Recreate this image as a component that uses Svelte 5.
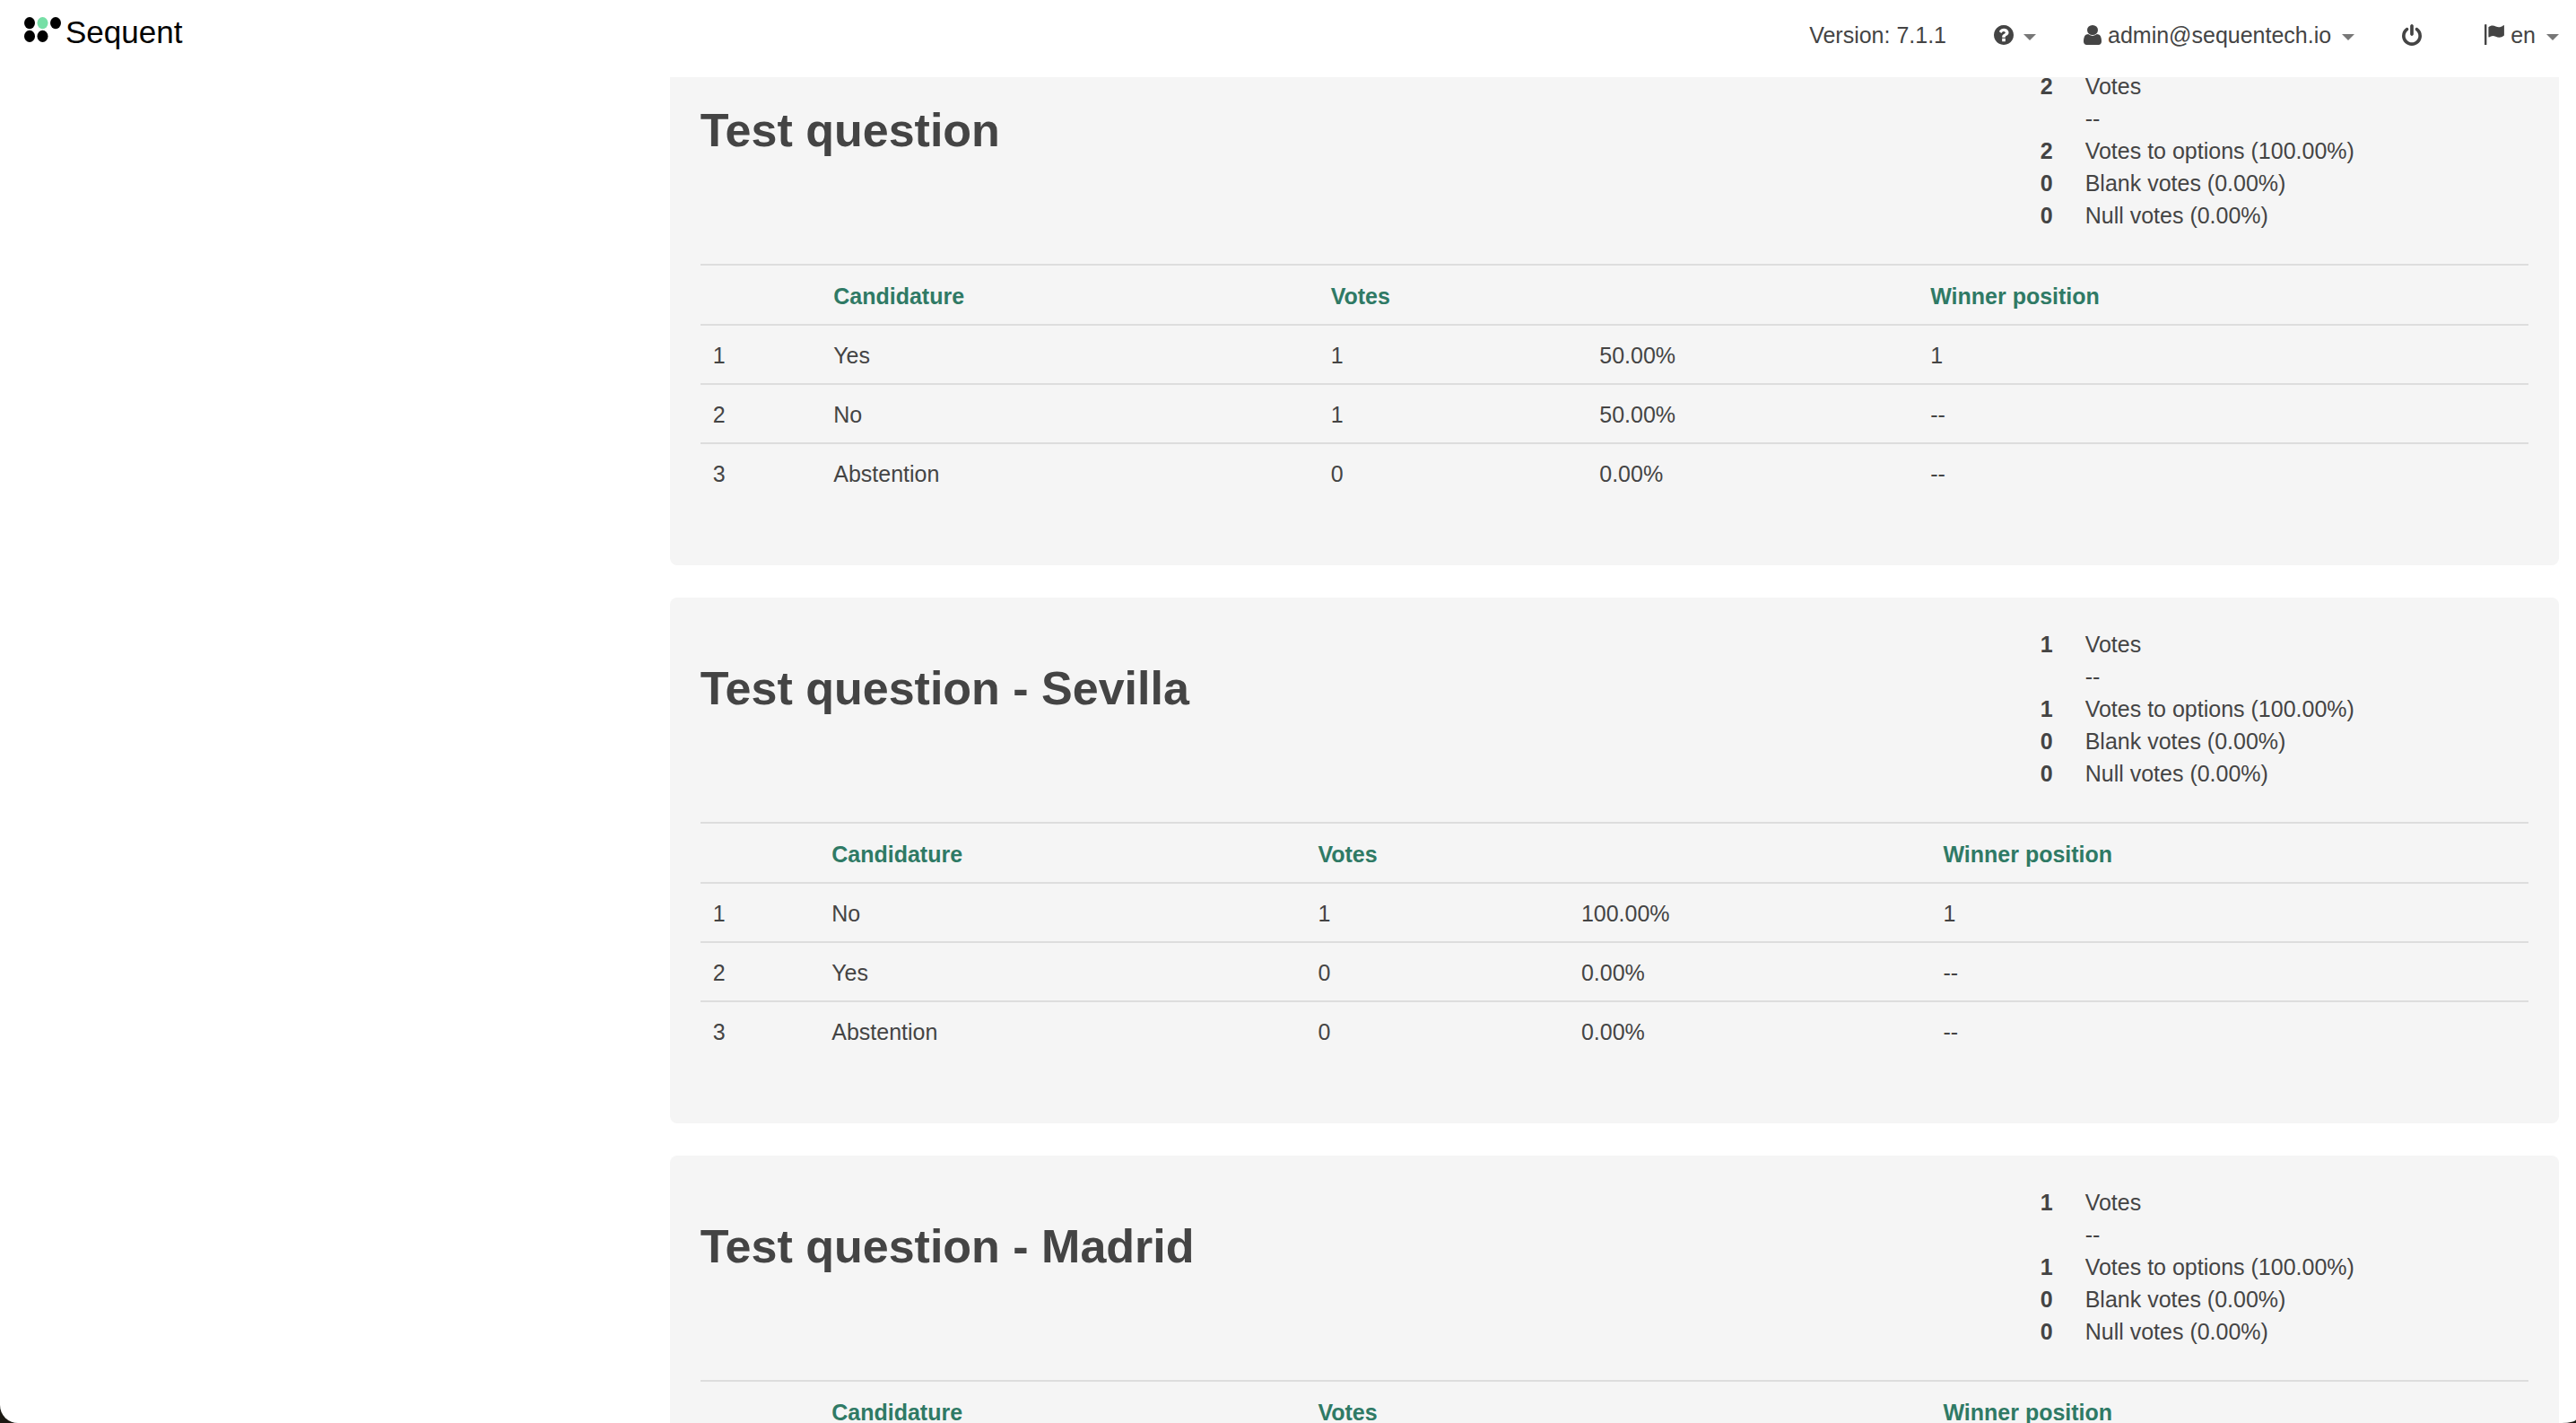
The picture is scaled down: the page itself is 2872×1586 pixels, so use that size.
<script>
  const questions = [
    {
      title: 'Test question',
      columns: [6.6, 27.2, 14.7, 18.1, 33.4],
      totals: [
        ['2', 'Votes'],
        ['', '--'],
        ['2', 'Votes to options (100.00%)'],
        ['0', 'Blank votes (0.00%)'],
        ['0', 'Null votes (0.00%)']
      ],
      rows: [
        ['1', 'Yes', '1', '50.00%', '1'],
        ['2', 'No', '1', '50.00%', '--'],
        ['3', 'Abstention', '0', '0.00%', '--']
      ]
    },
    {
      title: 'Test question - Sevilla',
      columns: [6.5, 26.6, 14.4, 19.8, 32.7],
      totals: [
        ['1', 'Votes'],
        ['', '--'],
        ['1', 'Votes to options (100.00%)'],
        ['0', 'Blank votes (0.00%)'],
        ['0', 'Null votes (0.00%)']
      ],
      rows: [
        ['1', 'No', '1', '100.00%', '1'],
        ['2', 'Yes', '0', '0.00%', '--'],
        ['3', 'Abstention', '0', '0.00%', '--']
      ]
    },
    {
      title: 'Test question - Madrid',
      columns: [6.5, 26.6, 14.4, 19.8, 32.7],
      totals: [
        ['1', 'Votes'],
        ['', '--'],
        ['1', 'Votes to options (100.00%)'],
        ['0', 'Blank votes (0.00%)'],
        ['0', 'Null votes (0.00%)']
      ],
      rows: []
    }
  ];
</script>

<div class="window">
  <header class="topbar">
    <a class="brand" href="#home">
      <svg class="mark" viewBox="0 0 42 28" aria-hidden="true">
        <ellipse cx="6" cy="6.6" rx="6" ry="6.6" />
        <ellipse class="mint" cx="20.5" cy="6.6" rx="6" ry="6.6" />
        <ellipse cx="35" cy="6.6" rx="6" ry="6.6" />
        <ellipse cx="6" cy="21.4" rx="6" ry="6.6" />
        <ellipse cx="20.5" cy="21.4" rx="6" ry="6.6" />
      </svg>
      <span>Sequent</span>
    </a>

    <nav class="menu" aria-label="Account">
      <span>Version: 7.1.1</span>
      <button type="button" class="item help" aria-label="Help">
        <svg class="icon" viewBox="128 128 1536 1536" aria-hidden="true">
          <path d="M1024 1376v-192q0-14-9-23t-23-9h-192q-14 0-23 9t-9 23v192q0 14 9 23t23 9h192q14 0 23-9t9-23zm256-672q0-88-55.5-163t-138.5-116-170-41q-243 0-371 213-15 24 8 42l132 100q7 6 19 6 16 0 25-12 53-68 86-92 34-24 86-24 48 0 85.5 26t37.5 59q0 38-20 61t-68 45q-63 28-115.5 86.5t-52.5 125.5v36q0 14 9 23t23 9h192q14 0 23-9t9-23q0-19 21.5-49.5t54.5-49.5q32-18 49-28.5t46-35 44.5-48 28-60.5 12.5-81zm384 192q0 209-103 385.5t-279.5 279.5-385.5 103-385.5-103-279.5-279.5-103-385.5 103-385.5 279.5-279.5 385.5-103 385.5 103 279.5 279.5 103 385.5z" />
        </svg>
        <span class="caret"></span>
      </button>
      <button type="button" class="item">
        <svg class="icon user" viewBox="256 128 1280 1536" preserveAspectRatio="none" aria-hidden="true">
          <path d="M1536 1399q0 109-62.5 187t-150.5 78h-854q-88 0-150.5-78t-62.5-187q0-85 8.5-160.5t31.5-152 58.5-131 94-89 134.5-34.5q131 128 313 128t313-128q76 0 134.5 34.5t94 89 58.5 131 31.5 152 8.5 160.5zm-256-887q0 159-112.5 271.5t-271.5 112.5-271.5-112.5-112.5-271.5 112.5-271.5 271.5-112.5 271.5 112.5 112.5 271.5z" />
        </svg>
        <span>admin@sequentech.io</span>
        <span class="caret"></span>
      </button>
      <button type="button" class="item" aria-label="Log out">
        <svg class="icon power" viewBox="128 0 1536 1664" aria-hidden="true">
          <path d="M1664 896q0 156-61 298t-164 245-245 164-298 61-298-61-245-164-164-245-61-298q0-182 80.5-343t226.5-270q43-32 95.5-25t83.5 50q32 42 24.5 94.5t-49.5 84.5q-98 74-151.5 181t-53.5 228q0 104 40.5 198.5t109.5 163.5 163.5 109.5 198.5 40.5 198.5-40.5 163.5-109.5 109.5-163.5 40.5-198.5q0-121-53.5-228t-151.5-181q-42-32-49.5-84.5t24.5-94.5q31-43 84-50t95 25q146 109 226.5 270t80.5 343zm-640-768v640q0 52-38 90t-90 38-90-38-38-90v-640q0-52 38-90t90-38 90 38 38 90z" />
        </svg>
      </button>
      <button type="button" class="item language">
        <svg class="icon flag" viewBox="0 0 22 24" aria-hidden="true">
          <path d="M0 .8Q0 0 1.2 0T2.400.8V23H0z" />
          <path d="M4.400 3.200C7 1 10 1 12.600 2.500 15.500 4 18.500 3.400 21 1.200q.9-.4.900.5V12.500c-3.400 2.800-6.400 2.600-9.400 1.200-2.800-1.200-5.200-.9-7.400.8q-.7.300-.7-.4z" />
        </svg>
        <span>en</span>
        <span class="caret"></span>
      </button>
    </nav>
  </header>

  <main class="results">
    {#each questions as question}
      <section class="card">
        <div class="summary">
          <h2>{question.title}</h2>
          <dl class="totals">
            {#each question.totals as [count, label]}
              <div class="total">
                <dd>{count}</dd>
                <dt>{label}</dt>
              </div>
            {/each}
          </dl>
        </div>
        <table>
          <colgroup>
            {#each question.columns as width}
              <col style="width: {width}%" />
            {/each}
          </colgroup>
          <thead>
            <tr>
              <th></th>
              <th scope="col">Candidature</th>
              <th scope="col">Votes</th>
              <th></th>
              <th scope="col">Winner position</th>
            </tr>
          </thead>
          <tbody>
            {#each question.rows as row}
              <tr>
                {#each row as value}
                  <td>{value}</td>
                {/each}
              </tr>
            {/each}
          </tbody>
        </table>
      </section>
    {/each}
  </main>
</div>

<style>
  :global(body) {
    margin: 0;
    background: #1c1a14;
  }

  .window {
    height: 100vh;
    overflow: hidden;
    background: #fff;
    border-radius: 0 0 16px 20px / 0 0 4px 20px;
    color: #444;
    font-family: 'Liberation Sans', Arial, sans-serif;
    font-size: 25px;
    line-height: 36px;
  }

  .topbar {
    position: sticky;
    top: 0;
    z-index: 1;
    display: flex;
    justify-content: space-between;
    align-items: flex-start;
    box-sizing: border-box;
    height: 86px;
    padding: 0 19px 0 27px;
    background: #fff;
  }

  .brand {
    display: flex;
    align-items: flex-start;
    gap: 4px;
    padding-top: 19px;
    color: #000;
    font-size: 35px;
    line-height: 34px;
    text-decoration: none;
  }

  .mark {
    width: 42px;
    height: 28px;
  }

  .mint {
    fill: #76dfa6;
  }

  .menu {
    display: flex;
    align-items: center;
    gap: 53px;
    padding-top: 21px;
  }

  .item {
    display: flex;
    align-items: center;
    gap: 7px;
    padding: 0;
    border: 0;
    background: none;
    color: inherit;
    font: inherit;
    cursor: pointer;
  }

  .help {
    gap: 11px;
  }

  .language {
    padding-left: 17px;
  }

  .item span + .caret {
    margin-left: 5px;
  }

  .icon {
    width: 22px;
    height: 22px;
    fill: currentColor;
  }

  .user {
    width: 20px;
  }

  .power,
  .flag {
    height: 24px;
  }

  .caret {
    margin-top: 4px;
    border: 7px solid transparent;
    border-top-color: #777;
    border-bottom: 0;
  }

  .results {
    display: flex;
    flex-direction: column;
    gap: 36px;
    margin: -42px 19px 0 26%;
  }

  .card {
    padding: 34px 34px 71px;
    border-radius: 8px;
    background: #f5f5f5;
  }

  .summary {
    display: flex;
    justify-content: space-between;
    margin-bottom: 36px;
  }

  h2 {
    margin: 39px 0 0;
    font-size: 52px;
    font-weight: bold;
    line-height: 57px;
  }

  .totals {
    width: 27%;
    margin: 0;
  }

  .total {
    display: grid;
    grid-template-columns: 20px 1fr;
    column-gap: 36px;
    min-height: 36px;
  }

  dd {
    margin: 0;
    font-weight: bold;
    text-align: right;
  }

  table {
    width: 100%;
    table-layout: fixed;
    border-spacing: 0;
  }

  th,
  td {
    height: 36px;
    padding: 15px 14px 13px;
    border-top: 2px solid #ddd;
    text-align: left;
  }

  th {
    padding-top: 16px;
    color: #2f7a65;
  }
</style>
